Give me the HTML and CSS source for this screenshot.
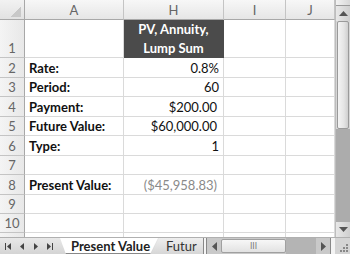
FILE: index.html
```html
<!DOCTYPE html>
<html>
<head>
<meta charset="utf-8">
<link rel="stylesheet" href="styles.css">
</head>
<body>
<div class="app">
  <div class="top">
    <div class="sheet">
      <div class="ch corner"></div>
      <div class="ch">A</div>
      <div class="ch">H</div>
      <div class="ch">I</div>
      <div class="ch">J</div>

      <div class="rh r1">1</div>
      <div class="c r1"></div>
      <div class="c r1 dark">PV, Annuity,<br>Lump Sum</div>
      <div class="c r1"></div>
      <div class="c r1"></div>

      <div class="rh">2</div>
      <div class="c lbl">Rate:</div>
      <div class="c num">0.8%</div>
      <div class="c"></div>
      <div class="c"></div>

      <div class="rh">3</div>
      <div class="c lbl">Period:</div>
      <div class="c num">60</div>
      <div class="c"></div>
      <div class="c"></div>

      <div class="rh">4</div>
      <div class="c lbl">Payment:</div>
      <div class="c num acc">$200.00</div>
      <div class="c"></div>
      <div class="c"></div>

      <div class="rh">5</div>
      <div class="c lbl">Future Value:</div>
      <div class="c num acc">$60,000.00</div>
      <div class="c"></div>
      <div class="c"></div>

      <div class="rh">6</div>
      <div class="c lbl">Type:</div>
      <div class="c num">1</div>
      <div class="c"></div>
      <div class="c"></div>

      <div class="rh">7</div>
      <div class="c"></div>
      <div class="c"></div>
      <div class="c"></div>
      <div class="c"></div>

      <div class="rh">8</div>
      <div class="c lbl">Present Value:</div>
      <div class="c num acc neg">($45,958.83)</div>
      <div class="c"></div>
      <div class="c"></div>

      <div class="rh">9</div>
      <div class="c"></div>
      <div class="c"></div>
      <div class="c"></div>
      <div class="c"></div>

      <div class="rh">10</div>
      <div class="c"></div>
      <div class="c"></div>
      <div class="c"></div>
      <div class="c"></div>

      <div class="rh"></div>
      <div class="c"></div>
      <div class="c"></div>
      <div class="c"></div>
      <div class="c"></div>
    </div>
    <div class="vscroll">
      <div class="vsplit"></div>
      <div class="vbtn"><svg width="9" height="5" viewBox="0 0 9 5"><path d="M0 5 L4.5 0 L9 5 Z" fill="#555"/></svg></div>
      <div class="vthumb"></div>
      <div class="vtrack"></div>
      <div class="vbtn"><svg width="9" height="5" viewBox="0 0 9 5"><path d="M0 0 L9 0 L4.5 5 Z" fill="#555"/></svg></div>
    </div>
  </div>
  <div class="bottom">
    <div class="nav">
      <svg width="60" height="17" viewBox="0 0 60 17">
        <rect x="5" y="5" width="1" height="7" fill="#444"/>
        <path d="M7 8.5 L11 5 L11 12 Z" fill="#444"/>
        <path d="M20 8.5 L24 5 L24 12 Z" fill="#444"/>
        <path d="M34 5 L38 8.5 L34 12 Z" fill="#444"/>
        <path d="M47 5 L51 8.5 L47 12 Z" fill="#444"/>
        <rect x="52" y="5" width="1" height="7" fill="#444"/>
      </svg>
    </div>
    <div class="tabs">
      <div class="tab active">Present Value</div>
      <div class="tab next">Futur</div>
    </div>
    <div class="hsplit"></div>
    <div class="hscroll">
      <div class="hbtn"><svg width="5" height="9" viewBox="0 0 5 9"><path d="M5 0 L0 4.5 L5 9 Z" fill="#555"/></svg></div>
      <div class="hthumb"><span class="grip">III</span></div>
      <div class="htrack"></div>
      <div class="hbtn"><svg width="5" height="9" viewBox="0 0 5 9"><path d="M0 0 L5 4.5 L0 9 Z" fill="#555"/></svg></div>
      <div class="hend"></div>
    </div>
    <div class="resize">
      <svg width="15" height="17" viewBox="0 0 15 17">
        <rect x="11" y="6" width="2" height="2" fill="#888"/>
        <rect x="8" y="9" width="2" height="2" fill="#888"/>
        <rect x="11" y="9" width="2" height="2" fill="#888"/>
        <rect x="5" y="12" width="2" height="2" fill="#888"/>
        <rect x="8" y="12" width="2" height="2" fill="#888"/>
        <rect x="11" y="12" width="2" height="2" fill="#888"/>
      </svg>
    </div>
  </div>
</div>
</body>
</html>
```

FILE: styles.css
```css
* { box-sizing: border-box; }
html, body { margin: 0; padding: 0; background: #fff; }
body { width: 350px; height: 254px; overflow: hidden; font-family: Lato, "Open Sans", sans-serif; }

.app { width: 350px; height: 254px; display: flex; flex-direction: column; }
.top { display: flex; height: 237px; overflow: hidden; }

.sheet {
  width: 335px;
  display: grid;
  grid-template-columns: 25px 99px 100px 62px 49px;
  grid-template-rows: 20px 38px 20px 19px 20px 19px 20px 19px 20px 19px 19px 20px;
  overflow: hidden;
}

.ch {
  background: linear-gradient(#f7f7f7, #e6e6e6);
  border-right: 1px solid #c4c4c4;
  border-bottom: 1px solid #a8a8a8;
  color: #666;
  font-size: 13px;
  display: flex; align-items: center; justify-content: center;
}
.corner {
  background:
    linear-gradient(135deg, transparent 60%, #c8c8c8 60%) no-repeat 8px 5px / 13px 12px,
    linear-gradient(#f2f2f2, #e2e2e2);
  border-right: 1px solid #a8a8a8;
}

.rh {
  background: linear-gradient(90deg, #f4f4f4, #e8e8e8);
  border-right: 1px solid #a8a8a8;
  border-bottom: 1px solid #c4c4c4;
  color: #666;
  font-size: 13px;
  display: flex; align-items: flex-end; justify-content: center;
  padding-bottom: 1px;
}

.c {
  border-right: 1px solid #dadada;
  border-bottom: 1px solid #dadada;
  font-size: 13px;
  color: #111;
  display: flex; align-items: flex-end;
  padding: 0 4px 1px 4px;
  white-space: nowrap;
}
.lbl { font-weight: 700; padding-left: 4px; }
.num { justify-content: flex-end; padding-right: 4px; }
.acc { padding-right: 6px; }
.neg { color: #8a8a8a; }

.dark {
  background: #4b4b4b;
  border-color: #4b4b4b;
  color: #fff;
  font-weight: 700;
  justify-content: center;
  align-items: center;
  text-align: center;
  line-height: 19px;
  padding: 0;
}

.vscroll {
  width: 15px;
  display: flex; flex-direction: column;
  background: #d6d6d6;
  border-left: 1px solid #bdbdbd;
}
.vsplit { height: 6px; background: linear-gradient(90deg, #f2f2f2, #d8d8d8); border-bottom: 1px solid #999; }
.vbtn { height: 15px; display: flex; align-items: center; justify-content: center; background: linear-gradient(90deg, #e8e8e8, #cfcfcf); }
.vthumb { height: 108px; background: linear-gradient(90deg, #f4f4f4, #e4e4e4 60%, #cfcfcf); border: 1px solid #9a9a9a; border-radius: 2px; margin: 0 1px; }
.vtrack { flex: 1; background: #acacac; }

.bottom {
  height: 17px;
  display: flex;
  background: linear-gradient(#e8e8e8, #d4d4d4);
  border-top: 1px solid #b0b0b0;
}
.nav { width: 60px; display: flex; align-items: center; }
.tabs { width: 143px; display: flex; align-items: stretch; overflow: hidden; }
.tab {
  font-size: 13px;
  display: flex; align-items: center;
  white-space: nowrap;
  overflow: hidden;
}
.tab.active {
  width: 98px;
  flex: none;
  background: #fff;
  font-weight: 700;
  padding-left: 11px;
  color: #222;
  clip-path: polygon(0 0, 100% 0, 92% 100%, 6% 100%);
  border-bottom: 1px solid #888;
}
.tab.next {
  flex: none;
  width: 52px;
  margin-left: -7px;
  padding-left: 15px;
  color: #333;
  background: linear-gradient(#eeeeee, #d6d6d6);
  clip-path: polygon(8px 0, 100% 0, 100% 100%, 0 100%);
}
.hsplit { width: 4px; background: #f4f4f4; border-left: 1px solid #888; border-right: 1px solid #888; }
.hscroll { width: 128px; display: flex; background: #c9c9c9; }
.hbtn { width: 14px; display: flex; align-items: center; justify-content: center; }
.hthumb {
  width: 65px;
  margin: 1px 0;
  background: linear-gradient(#f7f7f7, #e2e2e2);
  border: 1px solid #a0a0a0;
  border-radius: 2px;
  display: flex; align-items: center; justify-content: center;
}
.grip { font-size: 8px; color: #777; font-family: "DejaVu Sans", sans-serif; }
.htrack { flex: 1; background: #b4b4b4; }
.hend { width: 5px; background: #f4f4f4; border-left: 1px solid #888; }
.resize { width: 15px; background: #d4d4d4; }
```
